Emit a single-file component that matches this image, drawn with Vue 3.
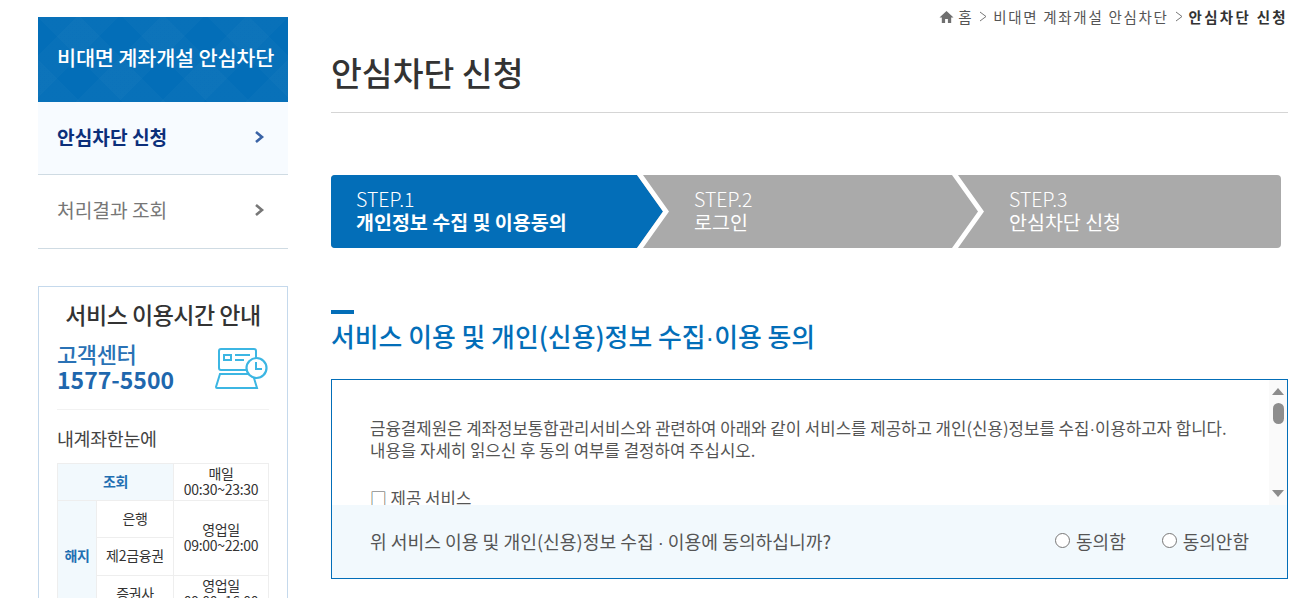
<template>
  <div class="page">
    <aside class="side">
      <h2 class="side-title">비대면 계좌개설 안심차단</h2>
      <ul class="side-menu">
        <li v-for="item in menu" :key="item.label" :class="['side-item', { active: item.active }]">
          <span>{{ item.label }}</span>
          <svg width="11" height="14" viewBox="0 0 11 14"><path d="M2 2l6 5-6 5" fill="none" stroke="currentColor" stroke-width="2.6" /></svg>
        </li>
      </ul>
      <div class="guide">
        <h3 class="guide-title">서비스 이용시간 안내</h3>
        <div class="center">
          <div class="center-text">
            <p class="center-name">고객센터</p>
            <p class="center-tel">1577-5500</p>
          </div>
          <svg class="center-icon" width="54" height="44" viewBox="0 0 54 44" fill="none" stroke="#3cb6e3" stroke-width="2">
            <path d="M36 23H6a2 2 0 0 1-2-2V4a2 2 0 0 1 2-2h33a2 2 0 0 1 2 2v8" />
            <rect x="9" y="8" width="7" height="5" />
            <path d="M20 8h15M20 13h9" />
            <path d="M5 27h32l2 4 3 10H2a1 1 0 0 1-1-1z" />
            <circle cx="41.5" cy="21" r="10" fill="#fff" stroke-width="2.2" />
            <path d="M41 15v7h6" />
          </svg>
        </div>
        <h4 class="guide-sub">내계좌한눈에</h4>
        <table class="time-table">
          <colgroup>
            <col style="width: 39px" />
            <col style="width: 77px" />
            <col />
          </colgroup>
          <tbody>
            <tr>
              <th colspan="2">조회</th>
              <td>매일<br />00:30~23:30</td>
            </tr>
            <tr>
              <th rowspan="3">해지</th>
              <td>은행</td>
              <td rowspan="2">영업일<br />09:00~22:00</td>
            </tr>
            <tr class="tall">
              <td>제2금융권</td>
            </tr>
            <tr>
              <td>증권사</td>
              <td>영업일<br />09:00~16:00</td>
            </tr>
          </tbody>
        </table>
      </div>
    </aside>

    <main class="main">
      <div class="crumbs">
        <svg class="crumb-home" width="15" height="14" viewBox="0 0 16 14"><path d="M8 0.5L0.5 7.5H3V13.5H6.5V9H9.5V13.5H13V7.5H15.5z" fill="#6f6f6f" /></svg>
        <span>홈</span>
        <svg width="8" height="11" viewBox="0 0 8 11"><path d="M1 1l6 4.5-6 4.5" fill="none" stroke="#777" /></svg>
        <span>비대면 계좌개설 안심차단</span>
        <svg width="8" height="11" viewBox="0 0 8 11"><path d="M1 1l6 4.5-6 4.5" fill="none" stroke="#777" /></svg>
        <b>안심차단 신청</b>
      </div>
      <h1 class="page-title">안심차단 신청</h1>

      <ol class="steps">
        <li v-for="step in steps" :key="step.no" :class="['step', step.cls, { on: step.on }]">
          <span class="step-no">{{ step.no }}</span>
          <span class="step-name">{{ step.name }}</span>
          <svg v-if="step.arrow" class="step-arrow" width="32" height="73" viewBox="0 0 32 73">
            <path d="M0 0L26 36.5L0 73" :fill="step.on ? '#036eb8' : '#aaaaaa'" />
            <path d="M0 0H6L32 36.5L6 73H0L26 36.5z" fill="#fff" />
          </svg>
        </li>
      </ol>

      <h2 class="section-title">서비스 이용 및 개인(신용)정보 수집<span class="dot">·</span>이용 동의</h2>

      <section class="agree">
        <div class="agree-body">
          <div class="agree-text">
            <p>금융결제원은 계좌정보통합관리서비스와 관련하여 아래와 같이 서비스를 제공하고 개인(신용)정보를 수집<span class="dot">·</span>이용하고자 합니다.<br />내용을 자세히 읽으신 후 동의 여부를 결정하여 주십시오.</p>
            <p class="agree-item">□ 제공 서비스</p>
          </div>
          <div class="scrollbar">
            <span class="arrow up"></span>
            <span class="thumb"></span>
            <span class="arrow down"></span>
          </div>
        </div>
        <div class="agree-foot">
          <span>위 서비스 이용 및 개인(신용)정보 수집 <span class="dot">·</span> 이용에 동의하십니까?</span>
          <div class="radios">
            <label><input type="radio" name="agree" />동의함</label>
            <label><input type="radio" name="agree" />동의안함</label>
          </div>
        </div>
      </section>
    </main>
  </div>
</template>

<script setup>
const menu = [
  { label: "안심차단 신청", active: true },
  { label: "처리결과 조회", active: false },
];

const steps = [
  { no: "STEP.1", name: "개인정보 수집 및 이용동의", cls: "s1", on: true, arrow: true },
  { no: "STEP.2", name: "로그인", cls: "s2", on: false, arrow: true },
  { no: "STEP.3", name: "안심차단 신청", cls: "s3", on: false, arrow: false },
];
</script>

<style>
html,
body {
  margin: 0;
  background: #fff;
}
</style>

<style scoped>
.page {
  display: flex;
  height: 598px;
  overflow: hidden;
  padding-left: 38px;
  font-family: "Noto Sans CJK KR", "Noto Sans", sans-serif;
  color: #555;
  box-sizing: border-box;
}

h1,
h2,
h3,
h4,
p,
ul,
ol {
  margin: 0;
  padding: 0;
  list-style: none;
}

.dot {
  font-family: "Liberation Sans", sans-serif;
  line-height: 0;
}

.side {
  width: 250px;
  padding-top: 17px;
  flex-shrink: 0;
}

.side-title {
  height: 85px;
  line-height: 81px;
  padding-left: 19px;
  background-color: #036eb8;
  background-image: repeating-linear-gradient(45deg, rgba(255, 255, 255, 0.02) 0 30px, transparent 30px 60px), repeating-linear-gradient(-45deg, rgba(255, 255, 255, 0.02) 0 30px, transparent 30px 60px);
  color: #fff;
  font-size: 20.8px;
  font-weight: 500;
  letter-spacing: -0.2px;
}

.side-item {
  display: flex;
  justify-content: space-between;
  align-items: center;
  height: 69px;
  padding: 0 23px 4px 19px;
  border-bottom: 1px solid #cfdbe3;
  color: #777;
  font-size: 19.2px;
}

.side-item.active {
  height: 70px;
  padding-bottom: 2px;
  background: #f7fbff;
  color: #0c2f7a;
  font-weight: 700;
}

.side-item.active svg {
  color: #3a63a6;
}

.guide {
  margin-top: 37px;
  height: 400px;
  padding: 0 18px;
  border: 1px solid #c5d9ec;
  box-sizing: border-box;
}

.guide-title {
  margin-top: 10px;
  text-align: center;
  color: #333;
  font-size: 23px;
  line-height: 34px;
  font-weight: 500;
  letter-spacing: -0.5px;
}

.center {
  display: flex;
  justify-content: space-between;
  align-items: center;
  height: 54px;
  margin-top: 9px;
  padding-bottom: 15px;
  border-bottom: 1px solid #f2f2f2;
}

.center-icon {
  margin-top: 4px;
}

.center-name {
  color: #2a72b5;
  font-size: 22px;
  line-height: 25px;
  font-weight: 500;
  letter-spacing: -0.4px;
}

.center-tel {
  color: #1f67ad;
  font-size: 23px;
  line-height: 27px;
  font-weight: 700;
}

.guide-sub {
  margin-top: 15px;
  color: #444;
  font-size: 18.4px;
  font-weight: 400;
  line-height: 27px;
  letter-spacing: -0.3px;
}

.time-table {
  width: 212px;
  margin-top: 11px;
  border-collapse: collapse;
  table-layout: fixed;
  font-size: 14px;
  line-height: 15.5px;
  text-align: center;
  color: #333;
  letter-spacing: -0.3px;
}

.time-table th,
.time-table td {
  height: 37px;
  padding: 0 0 1px;
  border: 1px solid #eeeeee;
  font-weight: 400;
  box-sizing: border-box;
}

.time-table .tall td {
  height: 38px;
}

.time-table th {
  background: #f2f9fd;
  color: #1f6fb2;
  font-weight: 700;
}

.main {
  width: 957px;
  margin-left: 43px;
  flex-shrink: 0;
}

.crumbs {
  display: flex;
  justify-content: flex-end;
  align-items: center;
  gap: 6px;
  height: 17px;
  margin-top: 8px;
  margin-bottom: 1px;
  color: #555;
  font-size: 14.5px;
  letter-spacing: 1.7px;
}

.crumb-home {
  margin-right: -2px;
}

.crumbs b {
  color: #333;
  font-weight: 700;
  letter-spacing: 2.3px;
}

.page-title {
  height: 86px;
  line-height: 92px;
  border-bottom: 1px solid #d5d5d5;
  color: #333;
  font-size: 33.5px;
  font-weight: 500;
}

.steps {
  display: flex;
  width: 950px;
  height: 73px;
  margin-top: 62px;
  border-radius: 4px;
  background: #aaaaaa;
  color: #fff;
}

.step {
  position: relative;
  display: flex;
  flex-direction: column;
  justify-content: center;
  padding-bottom: 3px;
  font-size: 19.5px;
  line-height: 23px;
  box-sizing: border-box;
}

.step-no {
  font-weight: 300;
}

.step-arrow {
  position: absolute;
  top: 0;
  left: 100%;
  z-index: 1;
}

.s1 {
  width: 306px;
  padding-left: 25px;
  background: #036eb8;
  border-radius: 4px 0 0 4px;
}

.s1 .step-name {
  font-weight: 700;
}

.s2 {
  width: 315px;
  padding-left: 57px;
}

.s3 {
  flex: 1;
  padding-left: 57px;
}

.section-title {
  position: relative;
  margin-top: 62px;
  padding-top: 3px;
  height: 61px;
  line-height: 46px;
  color: #036eb8;
  font-size: 25.85px;
  font-weight: 500;
  box-sizing: border-box;
}

.section-title::before {
  content: "";
  position: absolute;
  top: 0;
  left: 0;
  width: 23px;
  height: 4px;
  background: #036eb8;
}

.agree {
  height: 200px;
  margin-top: 8px;
  border: 1px solid #036eb8;
  box-sizing: border-box;
}

.agree-body {
  display: flex;
  height: 125px;
  overflow: hidden;
}

.agree-text {
  flex: 1;
  padding: 37px 0 0 38px;
  color: #555;
  font-size: 16.76px;
  line-height: 22px;
}

.agree-item {
  margin-top: 26px;
}

.scrollbar {
  display: flex;
  flex-direction: column;
  align-items: center;
  width: 18px;
  background: #fafafa;
}

.arrow {
  width: 0;
  height: 0;
  border-left: 6.5px solid transparent;
  border-right: 6.5px solid transparent;
}

.arrow.up {
  margin-top: 8px;
  border-bottom: 7px solid #8c8c8c;
}

.arrow.down {
  margin-top: 66px;
  border-top: 7px solid #8c8c8c;
}

.thumb {
  width: 11px;
  height: 21px;
  margin-top: 8px;
  border-radius: 6px;
  background: #8d8d8d;
}

.agree-foot {
  display: flex;
  justify-content: space-between;
  align-items: center;
  height: 73px;
  padding: 0 38px 2px;
  background: #f2f9fd;
  color: #555;
  font-size: 18.2px;
  box-sizing: border-box;
}

.radios {
  display: flex;
  gap: 36px;
  font-size: 18px;
}

.radios label {
  display: flex;
  align-items: center;
  gap: 6px;
}

.radios input {
  width: 15px;
  height: 15px;
  margin: 0;
}
</style>
